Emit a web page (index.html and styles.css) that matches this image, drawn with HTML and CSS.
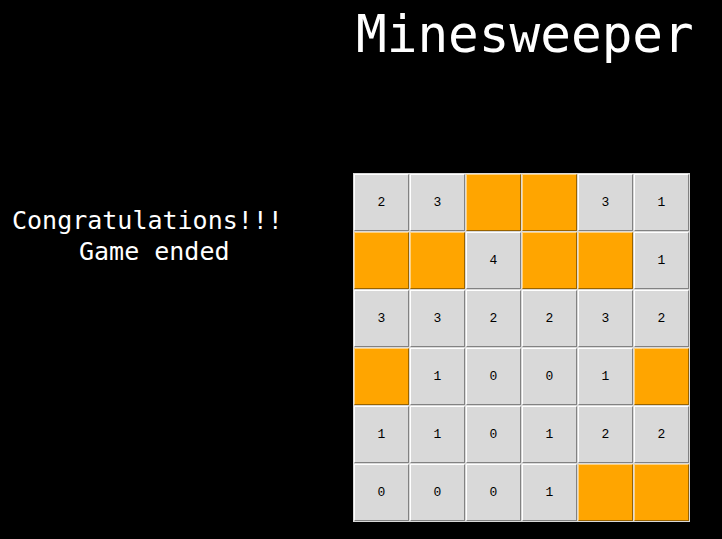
FILE: index.html
```html
<!DOCTYPE html>
<html>
<head>
<meta charset="utf-8">
<title>Minesweeper</title>
<link rel="stylesheet" href="styles.css">
</head>
<body>
<div class="app">
  <h1 class="title">Minesweeper</h1>
  <div class="message">
    <div class="line1">Congratulations!!!</div>
    <div class="line2">Game ended</div>
  </div>
  <div class="board">
    <div class="cell">2</div><div class="cell">3</div><div class="cell mine"></div><div class="cell mine"></div><div class="cell">3</div><div class="cell">1</div>
    <div class="cell mine"></div><div class="cell mine"></div><div class="cell">4</div><div class="cell mine"></div><div class="cell mine"></div><div class="cell">1</div>
    <div class="cell">3</div><div class="cell">3</div><div class="cell">2</div><div class="cell">2</div><div class="cell">3</div><div class="cell">2</div>
    <div class="cell mine"></div><div class="cell">1</div><div class="cell">0</div><div class="cell">0</div><div class="cell">1</div><div class="cell mine"></div>
    <div class="cell">1</div><div class="cell">1</div><div class="cell">0</div><div class="cell">1</div><div class="cell">2</div><div class="cell">2</div>
    <div class="cell">0</div><div class="cell">0</div><div class="cell">0</div><div class="cell">1</div><div class="cell mine"></div><div class="cell mine"></div>
  </div>
</div>
</body>
</html>
```

FILE: styles.css
```css
html, body {
  margin: 0;
  padding: 0;
  background: #000;
  width: 722px;
  height: 539px;
  overflow: hidden;
}
.app {
  display: grid;
  grid-template-columns: 353px 337px;
  grid-template-rows: 173px auto;
  color: #fff;
  font-family: "DejaVu Sans Mono", "Liberation Mono", monospace;
}
.title {
  grid-column: 2;
  grid-row: 1;
  margin: 0;
  padding-top: 5px;
  padding-left: 3px;
  font-size: 51px;
  font-weight: normal;
  line-height: 60px;
  text-align: center;
  align-self: start;
}
.message {
  grid-column: 1;
  grid-row: 2;
  padding-top: 32px;
  font-size: 25px;
  line-height: 31px;
}
.line1 {
  padding-left: 12px;
}
.line2 {
  padding-left: 79px;
}
.board {
  grid-column: 2;
  grid-row: 2;
  display: grid;
  grid-template-columns: repeat(6, 55px);
  grid-auto-rows: 57px;
  gap: 1px;
  padding: 1px;
  background: #d9d9d9;
  width: max-content;
}
.cell {
  box-sizing: border-box;
  background: #d9d9d9;
  border: 1px solid;
  border-color: #ffffff #828282 #828282 #ffffff;
  display: flex;
  align-items: center;
  justify-content: center;
  color: #000;
  font-family: "Liberation Mono", "DejaVu Sans Mono", monospace;
  font-size: 13px;
}
.cell.mine {
  background: #ffa500;
  border-color: #ffd27f #996300 #996300 #ffd27f;
}
```
